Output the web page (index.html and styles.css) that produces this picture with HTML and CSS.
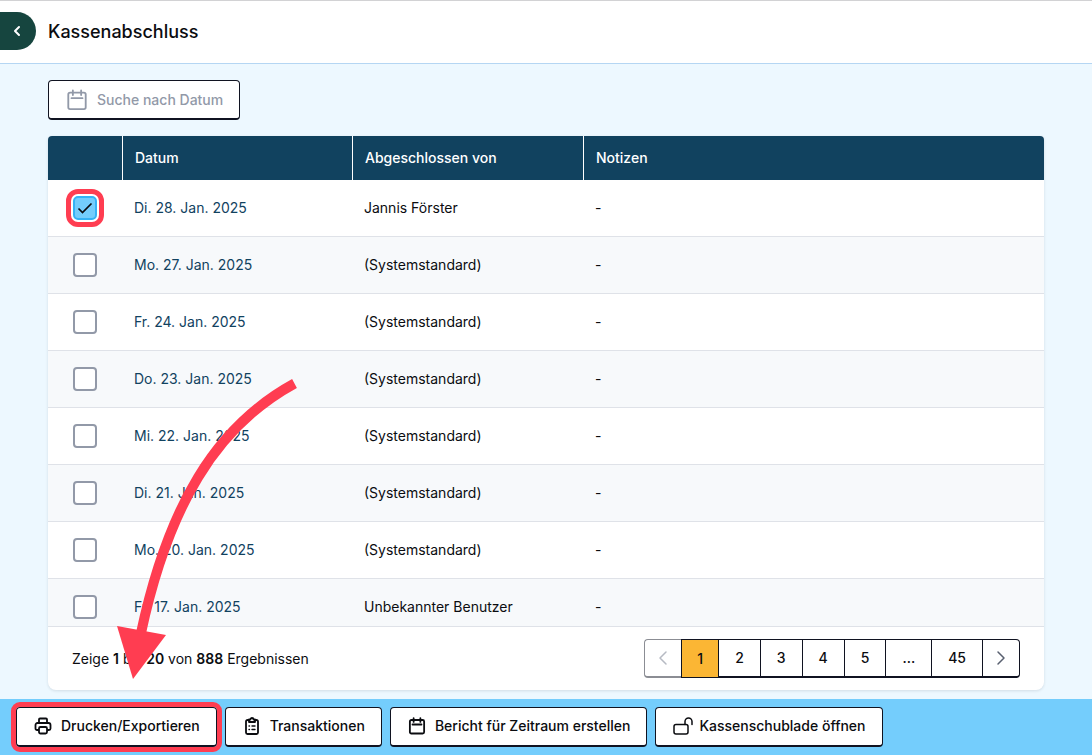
FILE: index.html
```
<!DOCTYPE html>
<html lang="de">
<head>
<meta charset="utf-8">
<meta name="viewport" content="width=device-width, initial-scale=1">
<title>Kassenabschluss</title>
<link rel="stylesheet" href="styles.css">
</head>
<body class="app">
<svg class="symbols" aria-hidden="true">
  <symbol id="calendar" viewBox="0 0 24 24"><rect x="2.500" y="4" width="19" height="18" rx="2"/><path d="M7.500 1.500v5M16.500 1.500v5M6 10h12"/></symbol>
</svg>
<header class="topbar">
  <button class="back" type="button" aria-label="Zurück"><svg class="back-icon" viewBox="0 0 8 12"><path d="M6 2 2 6l4 4"/></svg></button>
  <h1 class="title">Kassenabschluss</h1>
</header>
<main class="content">
  <button class="btn search" type="button"><svg class="icon icon-search"><use href="#calendar"/></svg>Suche nach Datum</button>
  <section class="card">
    <div class="scroll">
      <table class="table">
        <colgroup><col class="col-check"><col class="col-date"><col class="col-user"><col></colgroup>
        <thead><tr><th scope="col" aria-label="Auswahl"></th><th scope="col">Datum</th><th scope="col">Abgeschlossen von</th><th scope="col">Notizen</th></tr></thead>
        <tbody>
          <tr><td><input class="check marked" type="checkbox" aria-label="Di. 28. Jan. 2025" checked></td><td><a class="date" href="#">Di. 28. Jan. 2025</a></td><td>Jannis Förster</td><td>-</td></tr>
          <tr><td><input class="check" type="checkbox" aria-label="Mo. 27. Jan. 2025"></td><td><a class="date" href="#">Mo. 27. Jan. 2025</a></td><td>(Systemstandard)</td><td>-</td></tr>
          <tr><td><input class="check" type="checkbox" aria-label="Fr. 24. Jan. 2025"></td><td><a class="date" href="#">Fr. 24. Jan. 2025</a></td><td>(Systemstandard)</td><td>-</td></tr>
          <tr><td><input class="check" type="checkbox" aria-label="Do. 23. Jan. 2025"></td><td><a class="date" href="#">Do. 23. Jan. 2025</a></td><td>(Systemstandard)</td><td>-</td></tr>
          <tr><td><input class="check" type="checkbox" aria-label="Mi. 22. Jan. 2025"></td><td><a class="date" href="#">Mi. 22. Jan. 2025</a></td><td>(Systemstandard)</td><td>-</td></tr>
          <tr><td><input class="check" type="checkbox" aria-label="Di. 21. Jan. 2025"></td><td><a class="date" href="#">Di. 21. Jan. 2025</a></td><td>(Systemstandard)</td><td>-</td></tr>
          <tr><td><input class="check" type="checkbox" aria-label="Mo. 20. Jan. 2025"></td><td><a class="date" href="#">Mo. 20. Jan. 2025</a></td><td>(Systemstandard)</td><td>-</td></tr>
          <tr><td><input class="check" type="checkbox" aria-label="Fr. 17. Jan. 2025"></td><td><a class="date" href="#">Fr. 17. Jan. 2025</a></td><td>Unbekannter Benutzer</td><td>-</td></tr>
        </tbody>
      </table>
    </div>
    <div class="card-foot">
      <p class="summary">Zeige <b>1</b> bis <b>20</b> von <b>888</b> Ergebnissen</p>
      <nav class="pager" aria-label="Seiten">
        <button class="page prev" type="button" aria-label="Vorherige Seite" disabled><svg class="chevron" viewBox="0 0 10 16"><path d="M8 2 2 8l6 6"/></svg></button>
        <button class="page current" type="button" aria-current="page">1</button>
        <button class="page" type="button">2</button>
        <button class="page" type="button">3</button>
        <button class="page" type="button">4</button>
        <button class="page" type="button">5</button>
        <span class="page">...</span>
        <button class="page" type="button">45</button>
        <button class="page next" type="button" aria-label="Nächste Seite"><svg class="chevron" viewBox="0 0 10 16"><path d="m2 2 6 6-6 6"/></svg></button>
      </nav>
    </div>
  </section>
</main>
<footer class="actions">
  <button class="btn highlighted" type="button"><svg class="icon" viewBox="0 0 18 18"><path d="M5 6V2.500a1 1 0 0 1 1-1h6a1 1 0 0 1 1 1V6M4.500 13H3a1.500 1.500 0 0 1-1.500-1.500V8A2 2 0 0 1 3.500 6h11a2 2 0 0 1 2 2v3.500A1.500 1.500 0 0 1 15 13h-1.500M6.500 10h5a1.500 1.500 0 0 1 1.500 1.500V15a1.500 1.500 0 0 1-1.500 1.500h-5A1.500 1.500 0 0 1 5 15v-3.500A1.500 1.500 0 0 1 6.500 10z"/></svg>Drucken/Exportieren</button>
  <button class="btn" type="button"><svg class="icon" viewBox="0 0 18 18"><path d="M6 3H4.500A1.500 1.500 0 0 0 3 4.500v11A1.500 1.500 0 0 0 4.500 17h9a1.500 1.500 0 0 0 1.500-1.500v-11A1.500 1.500 0 0 0 13.500 3H12"/><path d="M6 2.500h1.500a1.500 1.500 0 0 1 3 0H12V5H6z"/><path class="thin" d="M6 9h.5M9 9h3M6 12.500h.5M9 12.500h3"/></svg>Transaktionen</button>
  <button class="btn" type="button"><svg class="icon icon-calendar"><use href="#calendar"/></svg>Bericht für Zeitraum erstellen</button>
  <button class="btn" type="button"><svg class="icon icon-lock" viewBox="0 0 20 18"><rect x="1" y="7.500" width="14" height="9.500" rx="2"/><path d="M12 7.500V4.500a3.500 3.500 0 0 1 7 0v3"/></svg>Kassenschublade öffnen</button>
</footer>
<svg class="pointer" viewBox="0 0 182 302" aria-hidden="true"><path class="pointer-line" d="M178.500 5.500C99 49 52 129 25 255"/><path class="pointer-head" d="m1 248 49 9-33 44z"/></svg>
</body>
</html>
```
FILE: styles.css
```
* { box-sizing: border-box; }

.app {
  position: relative;
  display: flex;
  flex-direction: column;
  height: 100vh;
  margin: 0;
  background: #edf8ff;
  color: #0b0c10;
  font: 400 14px/20px Inter, sans-serif;
}

.symbols { display: none; }
svg { fill: none; stroke: currentColor; stroke-linecap: round; stroke-linejoin: round; }

.topbar {
  display: flex;
  align-items: center;
  gap: 12px;
  flex: none;
  height: 64px;
  padding-bottom: 2px;
  border-top: 1px solid #d2d2d4;
  border-bottom: 1px solid #b5d6f3;
  background: #fff;
}
.back {
  display: flex;
  align-items: center;
  justify-content: flex-end;
  width: 36px;
  height: 38px;
  padding: 0 15px;
  border: 0;
  border-radius: 0 19px 19px 0;
  background: #16453f;
  color: #fff;
}
.back-icon { width: 8px; height: 12px; flex: none; stroke-width: 2; }
.title { margin: 0; padding-top: 2px; font-size: 18px; font-weight: 500; line-height: 24px; }

.content {
  display: flex;
  flex: 1;
  flex-direction: column;
  align-items: flex-start;
  gap: 16px;
  min-height: 0;
  padding: 16px 48px 9px;
}

.btn {
  display: flex;
  align-items: center;
  gap: 9px;
  height: 40px;
  padding: 0 16px 0 17px;
  border: 1px solid #101321;
  border-bottom-width: 2px;
  border-radius: 4px;
  background: #fff;
  color: #0b0c10;
  font: 500 14px/20px Inter, sans-serif;
  white-space: nowrap;
}
.icon { width: 18px; height: 18px; flex: none; stroke-width: 1.800; }
.icon-calendar { stroke-width: 2.400; }
.icon-lock { width: 20px; margin-right: -3px; stroke-width: 1.500; }
.thin { stroke-width: 1.400; }
.search { flex: none; color: #9299a8; }
.icon-search { width: 22px; height: 22px; stroke-width: 2; }

.card {
  display: flex;
  flex: 1;
  flex-direction: column;
  width: 100%;
  min-height: 0;
  overflow: hidden;
  border-radius: 4px 4px 8px 8px;
  background: #fff;
  box-shadow: 0 1px 3px #1020301f;
}
.scroll { flex: 1; min-height: 0; overflow: hidden; }
.table { width: 100%; border-collapse: separate; border-spacing: 0; table-layout: fixed; }
.col-check { width: 74px; }
.col-date { width: 230px; }
.col-user { width: 231px; }
.table th {
  height: 44px;
  padding: 0 12px;
  border-left: 1px solid #fff;
  background: #11425f;
  color: #fff;
  font-weight: 500;
  text-align: left;
}
.table th:first-child { border-left: 0; }
.table td { height: 57px; padding: 0 12px; border-bottom: 1px solid #dfe2e8; }
.table td:first-child { padding: 0; text-align: center; }
.table tr:nth-child(even) td { background: #f7f9fb; }
.date { color: #11425f; text-decoration: none; }

.check {
  display: block;
  width: 24px;
  height: 24px;
  margin: 0 auto;
  appearance: none;
  border: 2px solid #9299a8;
  border-radius: 4px;
  background: #fff;
}
.check:checked {
  border-color: #35b2f5;
  background: #74cdfc url("data:image/svg+xml,%3Csvg xmlns='http://www.w3.org/2000/svg' viewBox='0 0 20 20' fill='none' stroke='%230b0c10' stroke-width='1.700'%3E%3Cpath d='m3.500 10.500 4 4L16.500 5.500'/%3E%3C/svg%3E") center / 20px 20px no-repeat;
}
.marked { border-radius: 5px; outline: 5px solid #ff3d51; outline-offset: 2px; }

.card-foot {
  display: flex;
  flex: none;
  align-items: center;
  justify-content: space-between;
  height: 64px;
  padding: 0 24px;
  border-top: 1px solid #dfe2e8;
}
.summary { margin: 0; }
.summary b { font-weight: 600; }
.pager { display: flex; }
.page {
  display: flex;
  align-items: center;
  justify-content: center;
  height: 39px;
  padding: 0 16px;
  border: 1px solid #101321;
  border-bottom-width: 2px;
  border-left-width: 0;
  background: #fff;
  color: #0b0c10;
  font: 500 14px/20px Inter, sans-serif;
}
.prev { padding: 0 13px; border-left-width: 1px; border-right-width: 0; border-color: #8b8d94; border-radius: 4px 0 0 4px; color: #b6bac3; }
.current { padding: 0 15px; border-left-width: 1px; border-bottom-width: 1px; background: #fbb634; }
.next { padding: 0 13px; border-radius: 0 4px 4px 0; color: #596070; }
.chevron { width: 10px; height: 16px; stroke-width: 1.500; }

.actions {
  display: flex;
  flex: none;
  align-items: center;
  gap: 8px;
  height: 56px;
  padding: 0 16px;
  background: #74cdfc;
}
.actions .btn { padding-bottom: 2px; }
.highlighted { outline: 5px solid #ff3d51; outline-offset: 0; }

.pointer { position: absolute; top: 378px; left: 116px; width: 182px; height: 302px; pointer-events: none; }
.pointer-line { stroke: #ff3d51; stroke-width: 10; stroke-linecap: butt; }
.pointer-head { fill: #ff3d51; stroke: none; }
```
